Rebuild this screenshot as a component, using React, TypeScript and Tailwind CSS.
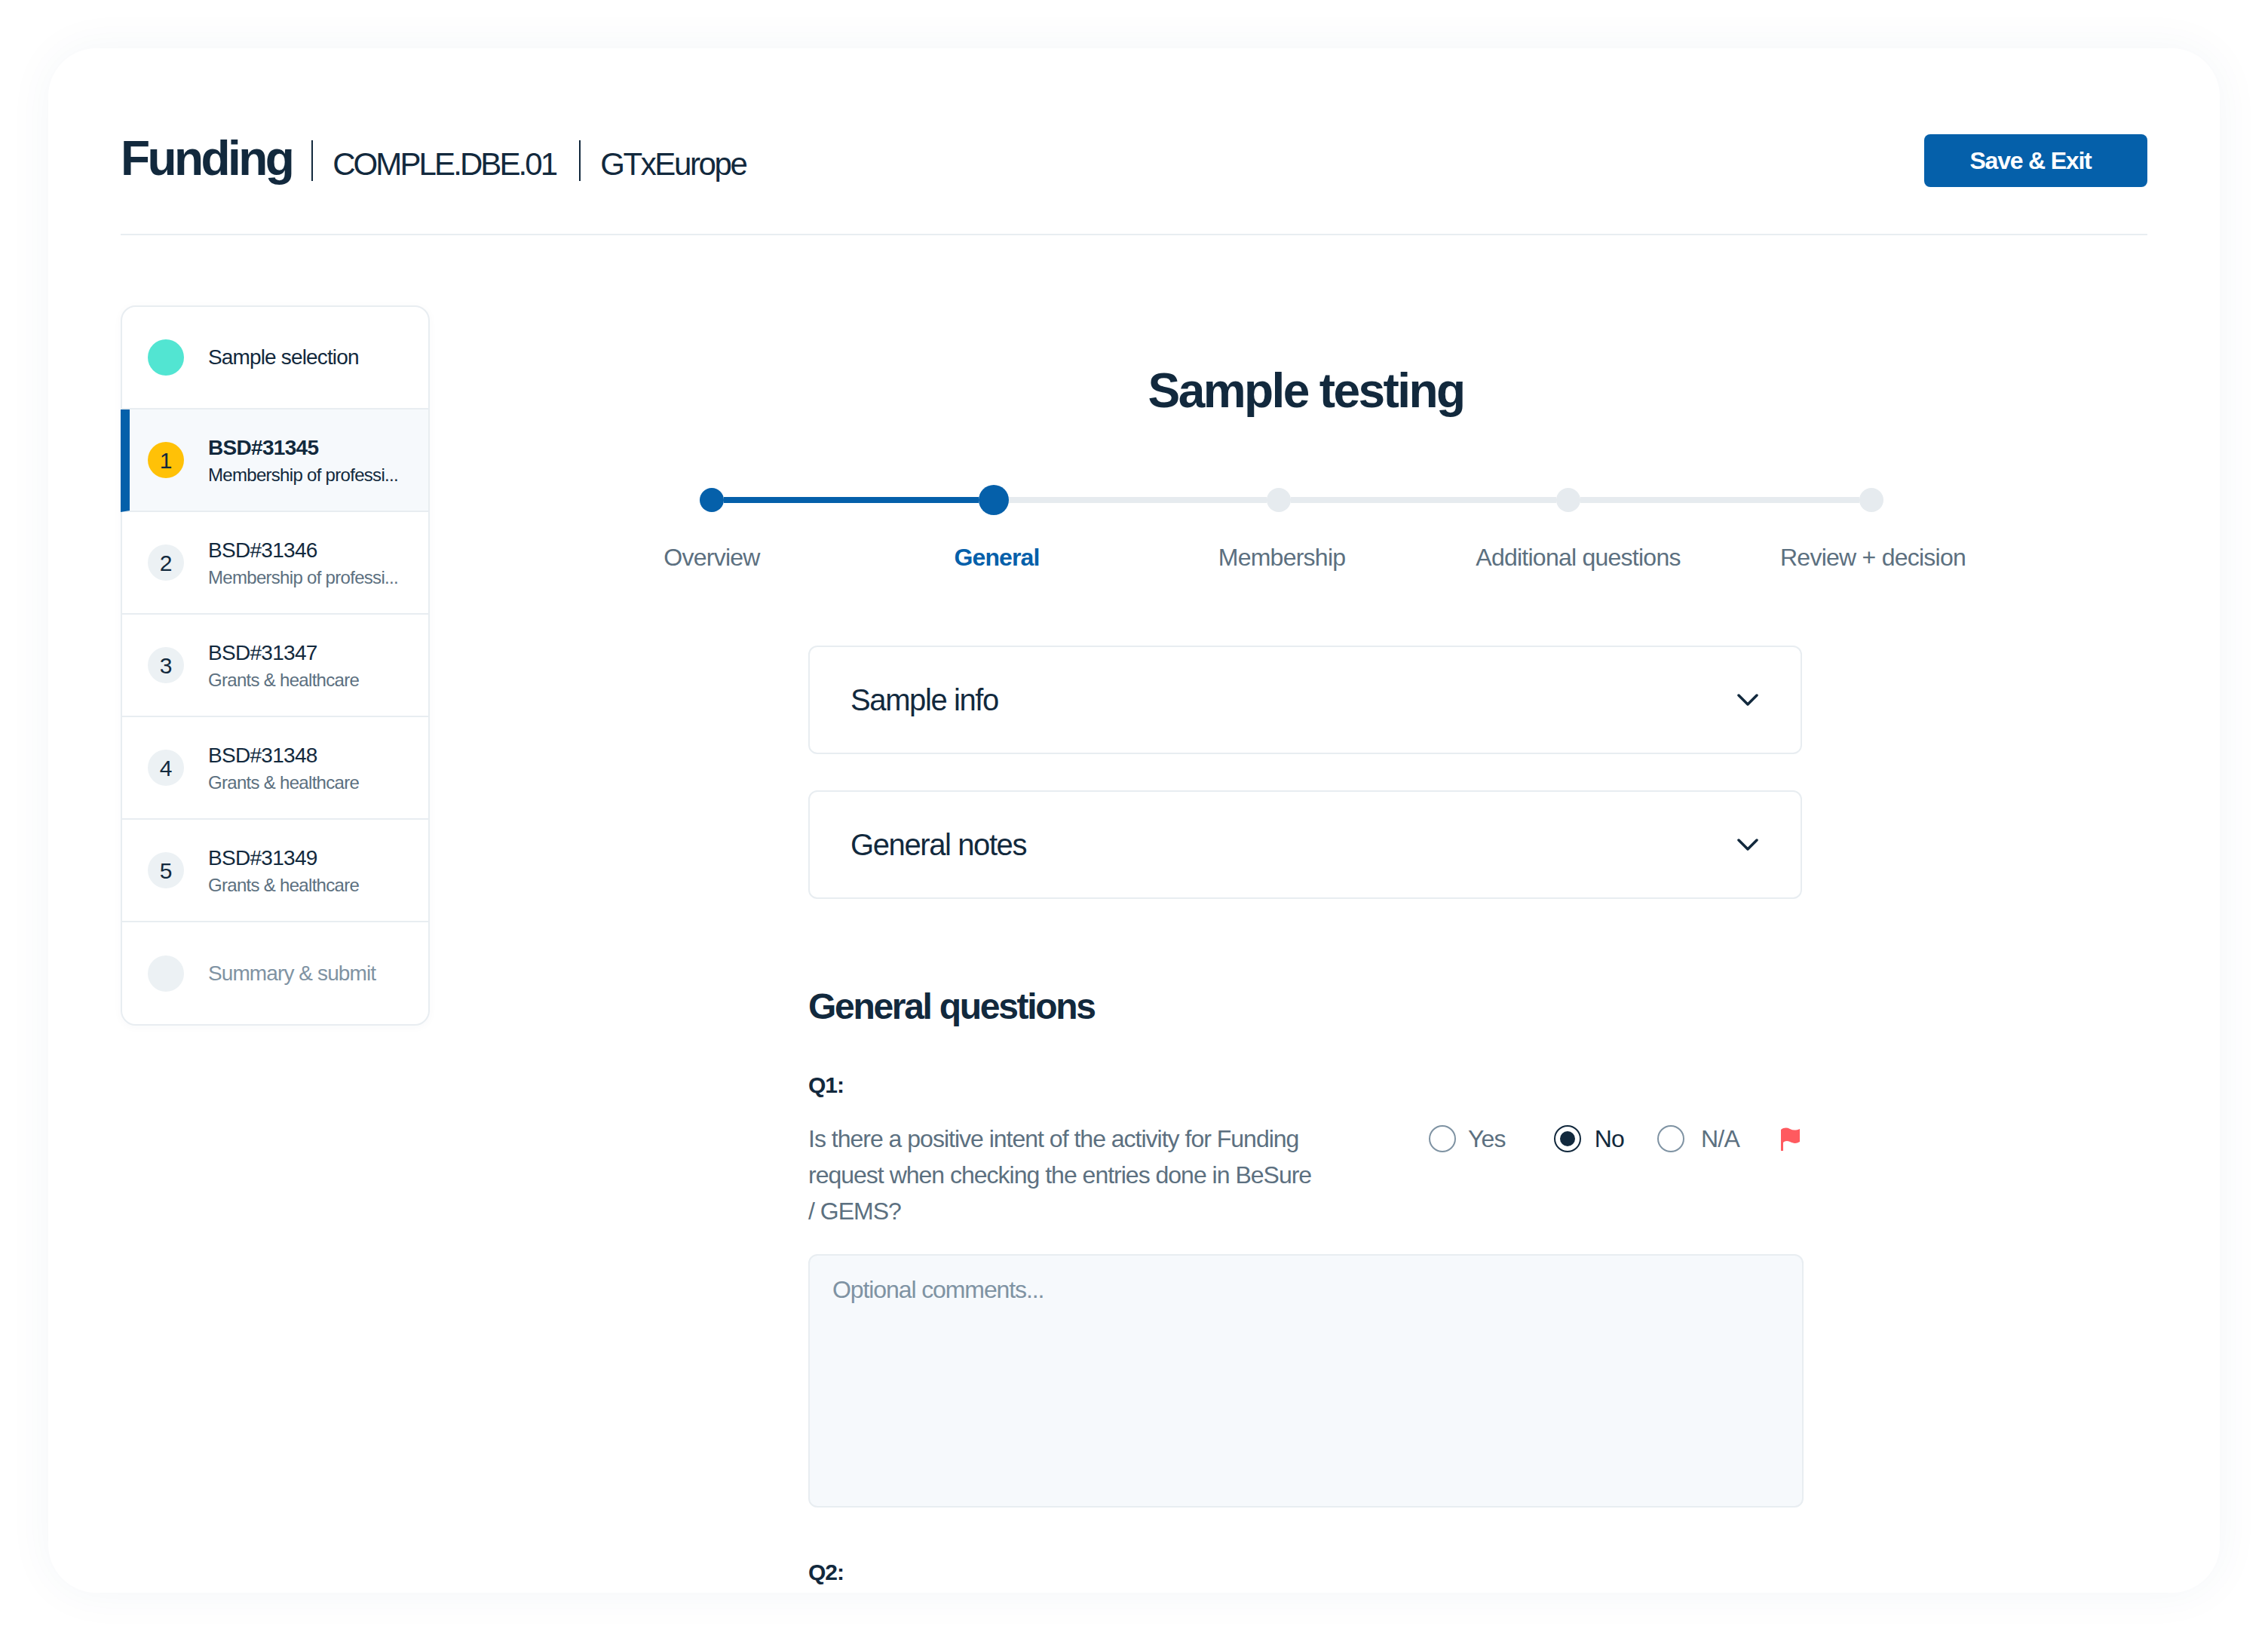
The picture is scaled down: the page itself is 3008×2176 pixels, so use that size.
import React from "react";

const font = { fontFamily: '"Liberation Sans", Arial, sans-serif' };

function Row({ n, title, sub, active }: { n: string; title: string; sub: string; active?: boolean }) {
  return (
    <div className={`flex h-[136px] items-center border-b-2 border-[#e8edf1] ${active ? "-ml-[2px] bg-[#f6f9fc] border-l-[12px] border-l-[#0560aa] pl-[24px]" : "pl-[34px]"}`}>
      <div className={`flex h-[48px] w-[48px] shrink-0 items-center justify-center rounded-full text-[30px] text-[#12293d] ${active ? "bg-[#ffc107]" : "bg-[#ecf1f4]"}`}>{n}</div>
      <div className="ml-[32px] min-w-0 pt-[3px]">
        <div className={`text-[28px] leading-[36px] tracking-[-0.7px] text-[#12293d] ${active ? "font-bold" : ""}`}>{title}</div>
        <div className={`text-[24px] leading-[36px] tracking-[-0.7px] whitespace-nowrap ${active ? "text-[#12293d]" : "text-[#5c7080]"}`}>{sub}</div>
      </div>
    </div>
  );
}

function Accordion({ label, className }: { label: string; className?: string }) {
  return (
    <div className={`flex h-[144px] w-[1318px] items-center justify-between rounded-[12px] border-2 border-[#e8edf1] pl-[54px] pr-[56px] ${className ?? ""}`}>
      <span className="text-[40px] tracking-[-1.4px] text-[#12293d]">{label}</span>
      <svg width="28" height="16" viewBox="0 0 28 16" fill="none"><path d="M2 2l12 12L26 2" stroke="#12293d" strokeWidth="3.5" strokeLinecap="round" strokeLinejoin="round" /></svg>
    </div>
  );
}

function Radio({ label, checked, gap }: { label: string; checked?: boolean; gap: string }) {
  return (
    <div className={`flex items-center ${gap}`}>
      <div className={`flex h-[36px] w-[36px] items-center justify-center rounded-full border-2 ${checked ? "border-[#12293d]" : "border-[#7f93a3]"}`}>
        {checked && <div className="h-[20px] w-[20px] rounded-full bg-[#12293d]" />}
      </div>
      <span className={`text-[32px] tracking-[-0.8px] ${checked ? "text-[#12293d]" : "text-[#5c7080]"}`}>{label}</span>
    </div>
  );
}

export default function App() {
  const steps = [
    { l: "Overview", w: "w-[128px]" },
    { l: "General", w: "w-[628px]", on: true },
    { l: "Membership", w: "w-[128px]" },
    { l: "Additional questions", w: "w-[658px]" },
    { l: "Review + decision", w: "w-[124px]" },
  ];
  return (
    <div style={font} className="h-[2176px] w-[3008px] bg-white p-[64px]">
      <div className="h-[2048px] overflow-hidden rounded-[64px] bg-white px-[96px] pt-[114px] shadow-[0_0_60px_rgba(30,70,110,0.05)]">
        <header className="flex h-[134px] items-start justify-between border-b-2 border-[#e8edf1]">
          <div className="flex h-[70px] items-center">
            <span className="pb-[6px] text-[64px] font-bold leading-[70px] tracking-[-3.6px] text-[#12293d]">Funding</span>
            <div className="ml-[26px] h-[54px] w-[2px] bg-[#12293d]" />
            <span className="ml-[26px] pt-[9px] text-[42px] tracking-[-2.9px] text-[#12293d]">COMPLE.DBE.01</span>
            <div className="ml-[31px] h-[54px] w-[2px] bg-[#12293d]" />
            <span className="ml-[26px] pt-[9px] text-[42px] tracking-[-2.4px] text-[#12293d]">GTxEurope</span>
          </div>
          <button className="flex h-[70px] w-[296px] items-center justify-center rounded-[8px] bg-[#0560aa] pr-[14px] text-[32px] font-bold tracking-[-1.2px] text-white">Save &amp; Exit</button>
        </header>

        <div className="mt-[93px] flex">
          <aside className="w-[410px] shrink-0 self-start rounded-[20px] border-2 border-[#e8edf1] shadow-[0_2px_12px_rgba(30,70,110,0.03)]">
            <div className="flex h-[136px] items-center border-b-2 border-[#e8edf1] pl-[34px]">
              <div className="h-[48px] w-[48px] rounded-full bg-[#52e5d2]" />
              <span className="ml-[32px] text-[28px] tracking-[-0.85px] text-[#12293d]">Sample selection</span>
            </div>
            <Row n="1" title="BSD#31345" sub="Membership of professi..." active />
            <Row n="2" title="BSD#31346" sub="Membership of professi..." />
            <Row n="3" title="BSD#31347" sub="Grants & healthcare" />
            <Row n="4" title="BSD#31348" sub="Grants & healthcare" />
            <Row n="5" title="BSD#31349" sub="Grants & healthcare" />
            <div className="flex h-[135px] items-center pl-[34px]">
              <div className="h-[48px] w-[48px] rounded-full bg-[#ecf1f4]" />
              <span className="ml-[32px] text-[28px] tracking-[-0.9px] text-[#7f93a3]">Summary &amp; submit</span>
            </div>
          </aside>

          <main className="ml-[46px] flex-1">
            <h1 className="mt-[75px] text-center text-[64px] font-bold leading-[76px] tracking-[-2.6px] text-[#12293d]">Sample testing</h1>

            <div className="mt-[87px] ml-[312px] flex h-[40px] items-center">
              <div className="h-[32px] w-[32px] shrink-0 rounded-full bg-[#0560aa]" />
              <div className="h-[8px] w-[338px] bg-[#0560aa]" />
              <div className="h-[40px] w-[40px] shrink-0 rounded-full bg-[#0560aa]" />
              <div className="h-[8px] w-[342px] bg-[#e6ebef]" />
              <div className="h-[32px] w-[32px] shrink-0 rounded-full bg-[#e6ebef]" />
              <div className="h-[8px] w-[352px] bg-[#e6ebef]" />
              <div className="h-[32px] w-[32px] shrink-0 rounded-full bg-[#e6ebef]" />
              <div className="h-[8px] w-[370px] bg-[#e6ebef]" />
              <div className="h-[32px] w-[32px] shrink-0 rounded-full bg-[#e6ebef]" />
            </div>
            <div className="mt-[36px] ml-[264px] flex">
              {steps.map((s) => (
                <div key={s.l} className={`flex shrink-0 justify-center ${s.w}`}>
                  <span className={`whitespace-nowrap text-[32px] leading-[40px] ${s.on ? "font-bold tracking-[-0.9px] text-[#0560aa]" : "tracking-[-0.75px] text-[#5c7080]"}`}>{s.l}</span>
                </div>
              ))}
            </div>

            <div className="ml-[456px] w-[1320px]">
              <Accordion label="Sample info" className="mt-[97px]" />
              <Accordion label="General notes" className="mt-[48px]" />

              <h2 className="mt-[113px] text-[48px] font-bold leading-[60px] tracking-[-2.3px] text-[#12293d]">General questions</h2>
              <div className="mt-[56px] text-[30px] font-bold leading-[36px] tracking-[-1px] text-[#12293d]">Q1:</div>

              <div className="mt-[29px] flex items-start justify-between">
                <p className="w-[670px] text-[32px] leading-[48px] tracking-[-1px] text-[#5c7080]">Is there a positive intent of the activity for Funding request when checking the entries done in BeSure / GEMS?</p>
                <div className="flex items-center">
                  <Radio label="Yes" gap="gap-[16px]" />
                  <div className="ml-[64px]"><Radio label="No" checked gap="gap-[18px]" /></div>
                  <div className="ml-[44px]"><Radio label="N/A" gap="gap-[22px]" /></div>
                  <svg className="ml-[54px] mr-[5px] mt-[2px]" width="26" height="32" viewBox="0 0 26 32"><path d="M1 3C5 0 9 0 13 2s8 2 13 0v17c-5 3-9 2-13 0s-7-1-9 1v11H1z" fill="#ff5a5f" /></svg>
                </div>
              </div>

              <div className="mt-[33px] h-[336px] rounded-[12px] border-2 border-[#e8edf1] bg-[#f6f9fc] px-[30px] pt-[21px] text-[32px] tracking-[-1.1px] text-[#7f93a3]">Optional comments...</div>

              <div className="mt-[68px] text-[30px] font-bold leading-[36px] tracking-[-1px] text-[#12293d]">Q2:</div>
            </div>
          </main>
        </div>
      </div>
    </div>
  );
}
